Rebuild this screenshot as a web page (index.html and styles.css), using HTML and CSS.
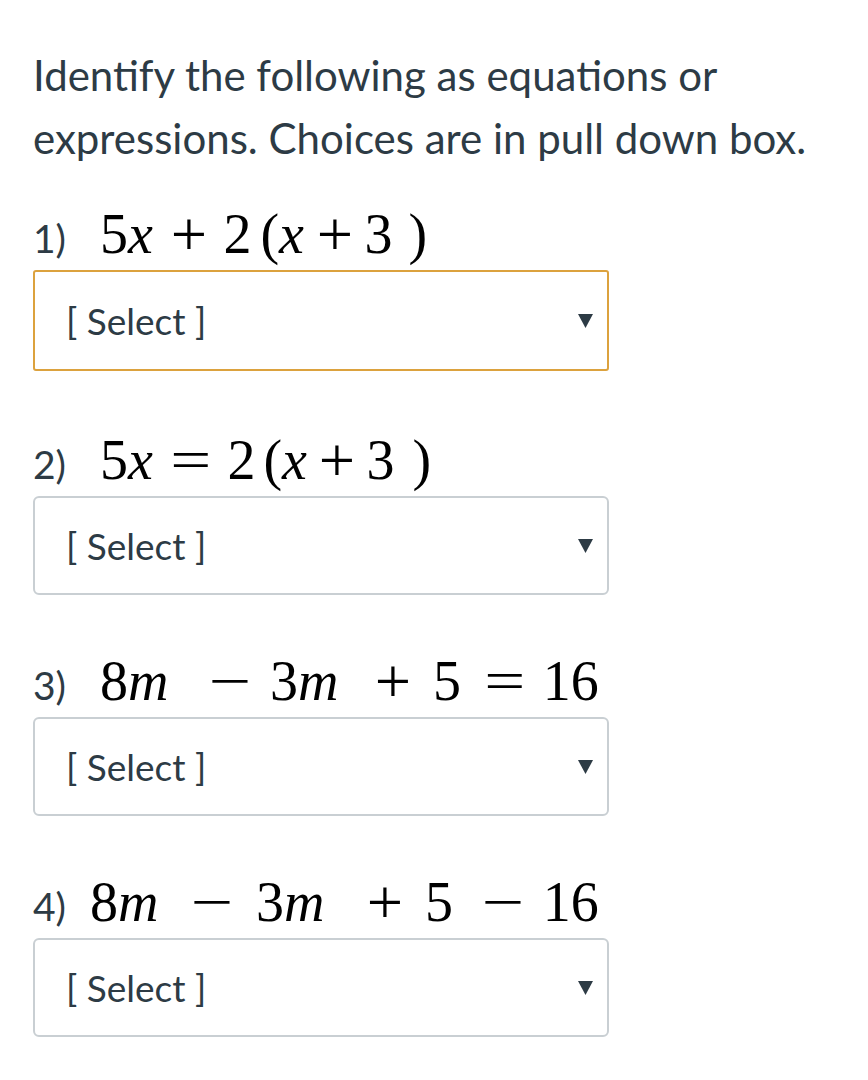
FILE: index.html
```html
<!DOCTYPE html>
<html>
<head>
<meta charset="utf-8">
<link rel="stylesheet" href="styles.css">
</head>
<body>
<div class="quiz">
  <p class="prompt">Identify the following as equations or expressions. Choices are in pull down box.</p>

  <div class="item first">
    <div class="qrow">
      <span class="num">1)</span>
      <span class="math">
        <span class="n">5</span><span class="v">x</span><span class="o pl g20">+</span><span class="n g19">2</span><span class="p g9">(</span><span class="v">x</span><span class="o pl g15">+</span><span class="n g14">3</span><span class="p g16">)</span>
      </span>
    </div>
    <div class="select focused"><span class="label">[ Select ]</span><svg class="caret" viewBox="0 0 14 14"><polygon points="0,1 14,1 7,14"/></svg></div>
  </div>

  <div class="item">
    <div class="qrow">
      <span class="num">2)</span>
      <span class="math">
        <span class="n">5</span><span class="v">x</span><span class="o eq g22">=</span><span class="n g21">2</span><span class="p g8">(</span><span class="v">x</span><span class="o pl g14">+</span><span class="n g14">3</span><span class="p g18">)</span>
      </span>
    </div>
    <div class="select"><span class="label">[ Select ]</span><svg class="caret" viewBox="0 0 14 14"><polygon points="0,1 14,1 7,14"/></svg></div>
  </div>

  <div class="item">
    <div class="qrow">
      <span class="num">3)</span>
      <span class="math">
        <span class="n">8</span><span class="v">m</span><span class="o mi g46">−</span><span class="n g24">3</span><span class="v">m</span><span class="o pl g38">+</span><span class="n g25">5</span><span class="o eq g28">=</span><span class="n g22">16</span>
      </span>
    </div>
    <div class="select"><span class="label">[ Select ]</span><svg class="caret" viewBox="0 0 14 14"><polygon points="0,1 14,1 7,14"/></svg></div>
  </div>

  <div class="item">
    <div class="qrow">
      <span class="num">4)</span>
      <span class="math tight">
        <span class="n">8</span><span class="v">m</span><span class="o mi g38">−</span><span class="n g28">3</span><span class="v">m</span><span class="o pl g44">+</span><span class="n g25">5</span><span class="o mi g34">−</span><span class="n g24">16</span>
      </span>
    </div>
    <div class="select"><span class="label">[ Select ]</span><svg class="caret" viewBox="0 0 14 14"><polygon points="0,1 14,1 7,14"/></svg></div>
  </div>
</div>
</body>
</html>
```
FILE: styles.css
```css
html, body {
  margin: 0;
  padding: 0;
  background: #ffffff;
}

body {
  font-family: Lato, "Open Sans", "Liberation Sans", sans-serif;
  color: #2d3b45;
}

.quiz {
  padding: 44px 0 0 33px;
  width: 820px;
}

.prompt {
  margin: 0 0 34px 0;
  font-size: 42px;
  line-height: 63px;
}

.item {
  margin-bottom: 56px;
}

.item.first {
  margin-bottom: 59px;
}

.qrow {
  display: flex;
  align-items: baseline;
  height: 60px;
  line-height: 60px;
}

.num {
  font-size: 39px;
  width: 67px;
  flex: none;
}

.math {
  font-family: "Liberation Serif", "Times New Roman", serif;
  font-size: 56px;
  color: #000000;
  white-space: nowrap;
}

.math.tight {
  margin-left: -10px;
}

.math span {
  display: inline-block;
}

.math .v {
  font-style: italic;
}

.math .eq {
  transform: scaleX(1.3);
}

.math .pl {
  transform: scale(1.15);
}

.math .mi {
  transform: scaleX(1.35);
}

.g8 { margin-left: 8px; }
.g9 { margin-left: 9px; }
.g14 { margin-left: 14px; }
.g15 { margin-left: 15px; }
.g16 { margin-left: 16px; }
.g18 { margin-left: 18px; }
.g19 { margin-left: 19px; }
.g20 { margin-left: 20px; }
.g21 { margin-left: 21px; }
.g22 { margin-left: 22px; }
.g24 { margin-left: 24px; }
.g25 { margin-left: 25px; }
.g28 { margin-left: 28px; }
.g34 { margin-left: 34px; }
.g38 { margin-left: 38px; }
.g44 { margin-left: 44px; }
.g46 { margin-left: 46px; }

.select {
  margin-top: 6px;
  box-sizing: border-box;
  width: 576px;
  height: 99px;
  border: 2px solid #c9cfd3;
  border-radius: 6px;
  display: flex;
  align-items: center;
  justify-content: space-between;
  padding: 0 14px 0 31px;
  background: #ffffff;
}

.select.focused {
  border-color: #dca23e;
  height: 101px;
  border-radius: 3px;
}

.label {
  font-size: 37px;
  color: #2d3b45;
}

.caret {
  width: 15px;
  height: 15px;
  fill: #2d3b45;
}
```
